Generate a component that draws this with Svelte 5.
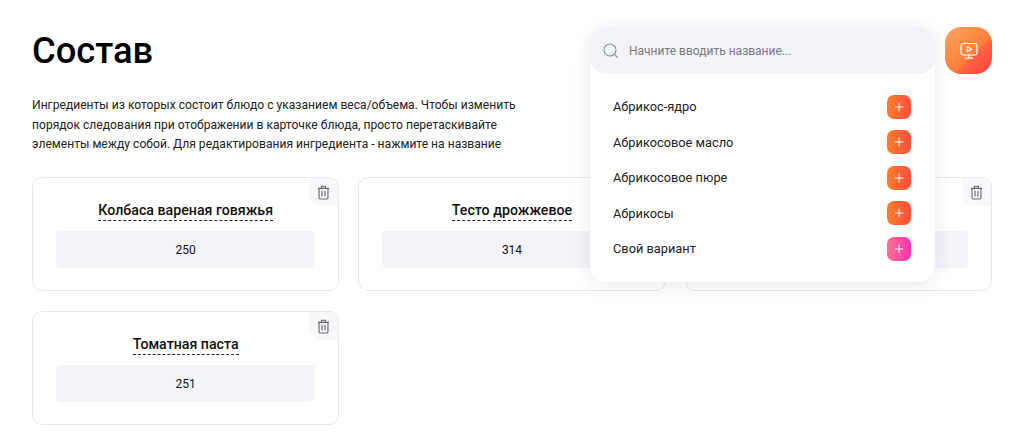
<script lang="ts">
    const cards = [
        { name: 'Колбаса вареная говяжья', amount: '250' },
        { name: 'Тесто дрожжевое', amount: '314' },
        { name: 'Сыр', amount: '120' },
        { name: 'Томатная паста', amount: '251' }
    ];

    const options = [
        { name: 'Абрикос-ядро', custom: false },
        { name: 'Абрикосовое масло', custom: false },
        { name: 'Абрикосовое пюре', custom: false },
        { name: 'Абрикосы', custom: false },
        { name: 'Свой вариант', custom: true }
    ];
</script>

<main>
    <header>
        <div class="intro">
            <h1>Состав</h1>
            <p>
                Ингредиенты из которых состоит блюдо с указанием веса/объема. Чтобы изменить
                порядок следования при отображении в карточке блюда, просто перетаскивайте
                элементы между собой. Для редактирования ингредиента - нажмите на название
            </p>
        </div>
        <div class="actions">
            <div class="search">
                <div class="search-field">
                    <svg width="18" height="18" viewBox="0 0 18 18" fill="none" stroke="#8f9299" stroke-width="1.1">
                        <circle cx="8" cy="8" r="6" />
                        <path d="M12.5 12.5 15.5 15.5" stroke-linecap="round" />
                    </svg>
                    <span>Начните вводить название...</span>
                </div>
                <ul>
                    {#each options as option}
                        <li>
                            <span>{option.name}</span>
                            <button class="add" class:custom={option.custom} aria-label="Добавить">
                                <svg width="10" height="10" viewBox="0 0 10 10" stroke="#fff" stroke-width="1" stroke-linecap="round">
                                    <path d="M5 1.2v7.6M1.2 5h7.6" />
                                </svg>
                            </button>
                        </li>
                    {/each}
                </ul>
            </div>
            <button class="preview" aria-label="Предпросмотр">
                <svg width="20" height="20" viewBox="0 0 20 20" fill="none" stroke="#fff" stroke-width="1.2" stroke-linecap="round" stroke-linejoin="round">
                    <rect x="2" y="2.5" width="16" height="11.5" rx="2.5" />
                    <path d="M8.3 5.6v5.2l4.2-2.6z" />
                    <path d="M10 14v3M6.5 17.2h7" />
                </svg>
            </button>
        </div>
    </header>

    <section class="grid">
        {#each cards as card}
            <article>
                <button class="remove" aria-label="Удалить">
                    <svg width="13" height="15" viewBox="0 0 14 16" fill="none" stroke="#63666c" stroke-width="1.2" stroke-linejoin="round">
                        <path d="M1 3.5h12M4.8 3.5V1.2h4.4v2.3" />
                        <path d="M2.2 3.5v10.2a1.3 1.3 0 0 0 1.3 1.3h7a1.3 1.3 0 0 0 1.3-1.3V3.5" />
                        <path d="M5.4 6.2v6M8.6 6.2v6" />
                    </svg>
                </button>
                <h2><span>{card.name}</span></h2>
                <div class="amount">{card.amount}</div>
            </article>
        {/each}
    </section>
</main>

<style>
    :global(body) {
        background-color: #ffffff;
    }

    main {
        padding: 27px 32px 0;
        font-family: Roboto, "Noto Sans", sans-serif;
        color: #111111;
    }

    header {
        display: flex;
        justify-content: space-between;
        align-items: flex-start;
        height: 150px;
    }

    h1 {
        margin: 0;
        font-size: 36.3px;
        line-height: 47px;
        font-weight: 500;
        color: #000000;
    }

    p {
        margin: 22px 0 0;
        width: 490px;
        font-size: 12.1px;
        line-height: 19.5px;
        color: #222222;
    }

    .actions {
        display: flex;
        gap: 10px;
        align-items: flex-start;
    }

    .search {
        width: 345px;
        height: 47px;
        position: relative;
        z-index: 2;
    }

    .search-field {
        display: flex;
        align-items: center;
        gap: 9px;
        height: 47px;
        padding: 0 12px;
        box-sizing: border-box;
        background-color: #f3f4f8;
        border-radius: 16px;
        font-size: 12px;
        color: #76797f;
        position: relative;
        z-index: 1;
    }

    ul {
        position: absolute;
        top: 0;
        left: 0;
        right: 0;
        height: 255px;
        margin: 0;
        padding: 62px 24px 0 23px;
        box-sizing: border-box;
        list-style: none;
        background-color: #ffffff;
        border-radius: 16px;
        box-shadow: 0 4px 22px rgba(30, 35, 60, 0.09);
    }

    li {
        display: flex;
        justify-content: space-between;
        align-items: center;
        height: 35.5px;
        font-size: 12.8px;
        color: #222222;
    }

    .add {
        width: 24px;
        height: 24px;
        padding: 0;
        display: flex;
        align-items: center;
        justify-content: center;
        border: none;
        border-radius: 7px;
        background: linear-gradient(90deg, #ff7c28, #ff4f42);
    }

    .add.custom {
        background: linear-gradient(90deg, #ff6f8f, #f233b5);
    }

    .preview {
        width: 47px;
        height: 47px;
        padding: 0;
        display: flex;
        align-items: center;
        justify-content: center;
        border: none;
        border-radius: 16px;
        background: linear-gradient(135deg, #ffa562 0%, #ff7f3c 58%, #ff6440 62%, #ff3d45 100%);
    }

    .grid {
        display: grid;
        grid-template-columns: repeat(3, 1fr);
        gap: 20px 19px;
    }

    article {
        position: relative;
        height: 114px;
        padding: 24px 23px 0;
        box-sizing: border-box;
        border: 1px solid #e8e9ee;
        border-radius: 10px;
        background-color: #ffffff;
    }

    .remove {
        position: absolute;
        top: 0;
        right: 0;
        width: 29px;
        height: 28px;
        padding: 0;
        display: flex;
        align-items: center;
        justify-content: center;
        border: none;
        border-radius: 0 10px 0 14px;
        background-color: #f8f8fa;
    }

    h2 {
        margin: 0;
        text-align: center;
        font-size: 14.2px;
        line-height: 17px;
        font-weight: 500;
        color: #111111;
    }

    h2 span {
        display: inline-block;
        padding-bottom: 1px;
        border-bottom: 1px dashed #222222;
    }

    .amount {
        margin-top: 10px;
        height: 37px;
        display: flex;
        align-items: center;
        justify-content: center;
        background-color: #f3f4f8;
        border-radius: 5px;
        font-size: 12px;
    }
</style>
